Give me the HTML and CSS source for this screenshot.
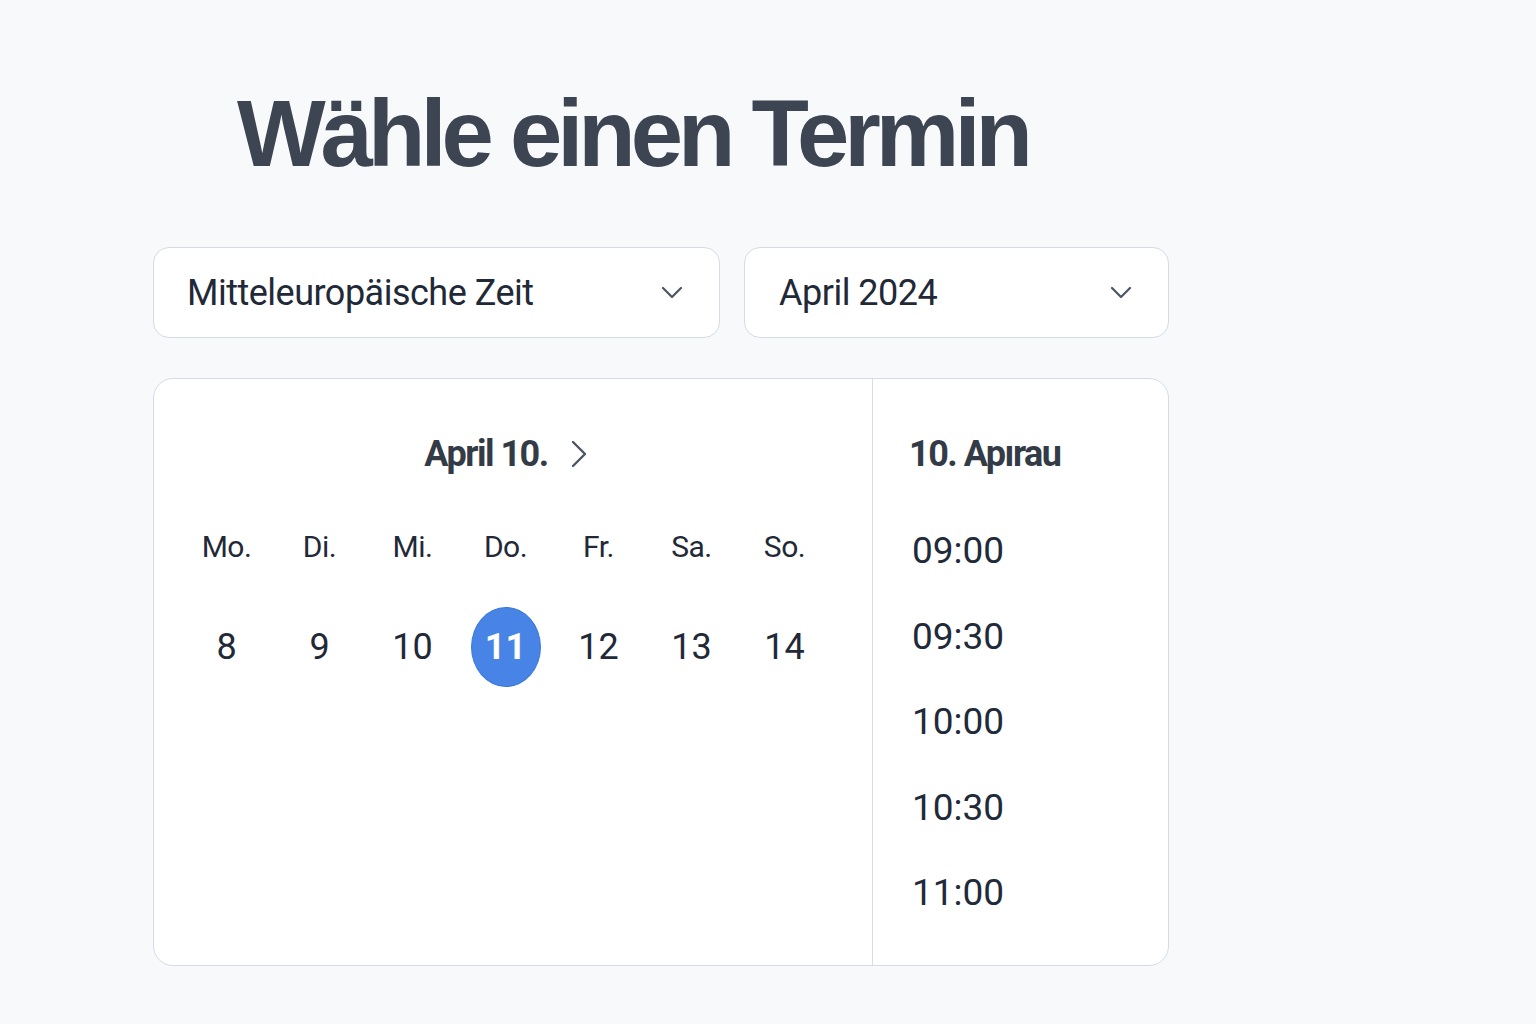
FILE: index.html
```html
<!DOCTYPE html>
<html lang="de">
<head>
    <meta charset="UTF-8">
    <meta name="viewport" content="width=device-width, initial-scale=1.0">
    <title>Termin wählen</title>
    <link rel="stylesheet" href="styles.css">
</head>
<body>
    <div class="page">
        <h1 class="title">Wähle einen Termin</h1>

        <div class="selects">
            <div class="select select-zone">
                <span>Mitteleuropäische Zeit</span>
                <svg class="chevron" width="22" height="14" viewBox="0 0 22 14"><path d="M2 2 L11 11 L20 2" fill="none" stroke="#4b5563" stroke-width="2.2" stroke-linecap="round" stroke-linejoin="round"/></svg>
            </div>
            <div class="select select-month">
                <span>April 2024</span>
                <svg class="chevron" width="22" height="14" viewBox="0 0 22 14"><path d="M2 2 L11 11 L20 2" fill="none" stroke="#4b5563" stroke-width="2.2" stroke-linecap="round" stroke-linejoin="round"/></svg>
            </div>
        </div>

        <div class="calendar">
            <div class="dates">
                <div class="dates-head">
                    <span>April 10.</span>
                    <svg width="18" height="30" viewBox="0 0 18 30"><path d="M3 3 L15 15 L3 27" fill="none" stroke="#4b5563" stroke-width="2.4" stroke-linecap="round" stroke-linejoin="round"/></svg>
                </div>
                <div class="week weekdays">
                    <span>Mo.</span><span>Di.</span><span>Mi.</span><span>Do.</span><span>Fr.</span><span>Sa.</span><span>So.</span>
                </div>
                <div class="week days">
                    <span>8</span><span>9</span><span>10</span><span class="selected">11</span><span>12</span><span>13</span><span>14</span>
                </div>
            </div>
            <div class="times">
                <div class="times-head">10. Apırau</div>
                <ul class="slots">
                    <li>09:00</li>
                    <li>09:30</li>
                    <li>10:00</li>
                    <li>10:30</li>
                    <li>11:00</li>
                </ul>
            </div>
        </div>
    </div>
</body>
</html>
```

FILE: styles.css
```css
body {
    margin: 0;
    min-height: 100vh;
    background: #f8f9fb;
    font-family: Roboto, "Liberation Sans", sans-serif;
    color: #1f2937;
}
.page {
    width: 1016px;
    margin-left: 153px;
    padding-top: 79px;
}
.title {
    margin: 0 0 0 84px;
    font-family: "Liberation Sans", Arial, sans-serif;
    font-size: 94px;
    line-height: 110px;
    font-weight: 700;
    letter-spacing: -5px;
    color: #3c4551;
}
.selects {
    display: flex;
    gap: 24px;
    margin-top: 58px;
}
.select {
    box-sizing: border-box;
    height: 91px;
    display: flex;
    align-items: center;
    justify-content: space-between;
    background: #fff;
    border: 1.5px solid #d5dbe4;
    border-radius: 16px;
    font-size: 36px;
    letter-spacing: -0.5px;
    color: #1f2937;
}
.select-zone {
    width: 567px;
    padding: 0 36px 0 33px;
}
.select-month {
    width: 425px;
    padding: 0 36px 0 34px;
}
.calendar {
    box-sizing: border-box;
    height: 588px;
    margin-top: 40px;
    display: grid;
    grid-template-columns: 719px 1fr;
    background: #fff;
    border: 1.5px solid #d5dbe4;
    border-radius: 20px;
}
.dates {
    border-right: 1.5px solid #d5dbe4;
    padding-top: 53px;
}
.dates-head {
    display: flex;
    justify-content: center;
    align-items: center;
    gap: 22px;
    height: 44px;
    margin-left: -14px;
    font-size: 36px;
    font-weight: 700;
    letter-spacing: -1.5px;
    color: #333b47;
}
.week {
    display: grid;
    grid-template-columns: repeat(7, 93px);
    margin-left: 26px;
    justify-items: center;
    align-items: center;
}
.weekdays {
    margin-top: 50px;
    height: 40px;
    font-size: 30px;
    letter-spacing: -0.5px;
    color: #1f2937;
}
.days {
    margin-top: 41px;
    height: 80px;
    font-size: 36px;
    color: #1f2937;
}
.days span {
    width: 70px;
    height: 80px;
    display: flex;
    align-items: center;
    justify-content: center;
}
.days .selected {
    background: #4784e6;
    border: 1px solid #3b78dc;
    box-sizing: border-box;
    border-radius: 50%;
    color: #fff;
    font-weight: 700;
}
.times {
    padding: 53px 0 0 36px;
}
.times-head {
    height: 44px;
    line-height: 44px;
    font-size: 36px;
    font-weight: 700;
    letter-spacing: -1.5px;
    color: #333b47;
}
.slots {
    list-style: none;
    margin: 32px 0 0 3px;
    padding: 0;
}
.slots li {
    height: 85.5px;
    line-height: 85.5px;
    font-size: 37px;
    color: #1f2a3a;
}
```
